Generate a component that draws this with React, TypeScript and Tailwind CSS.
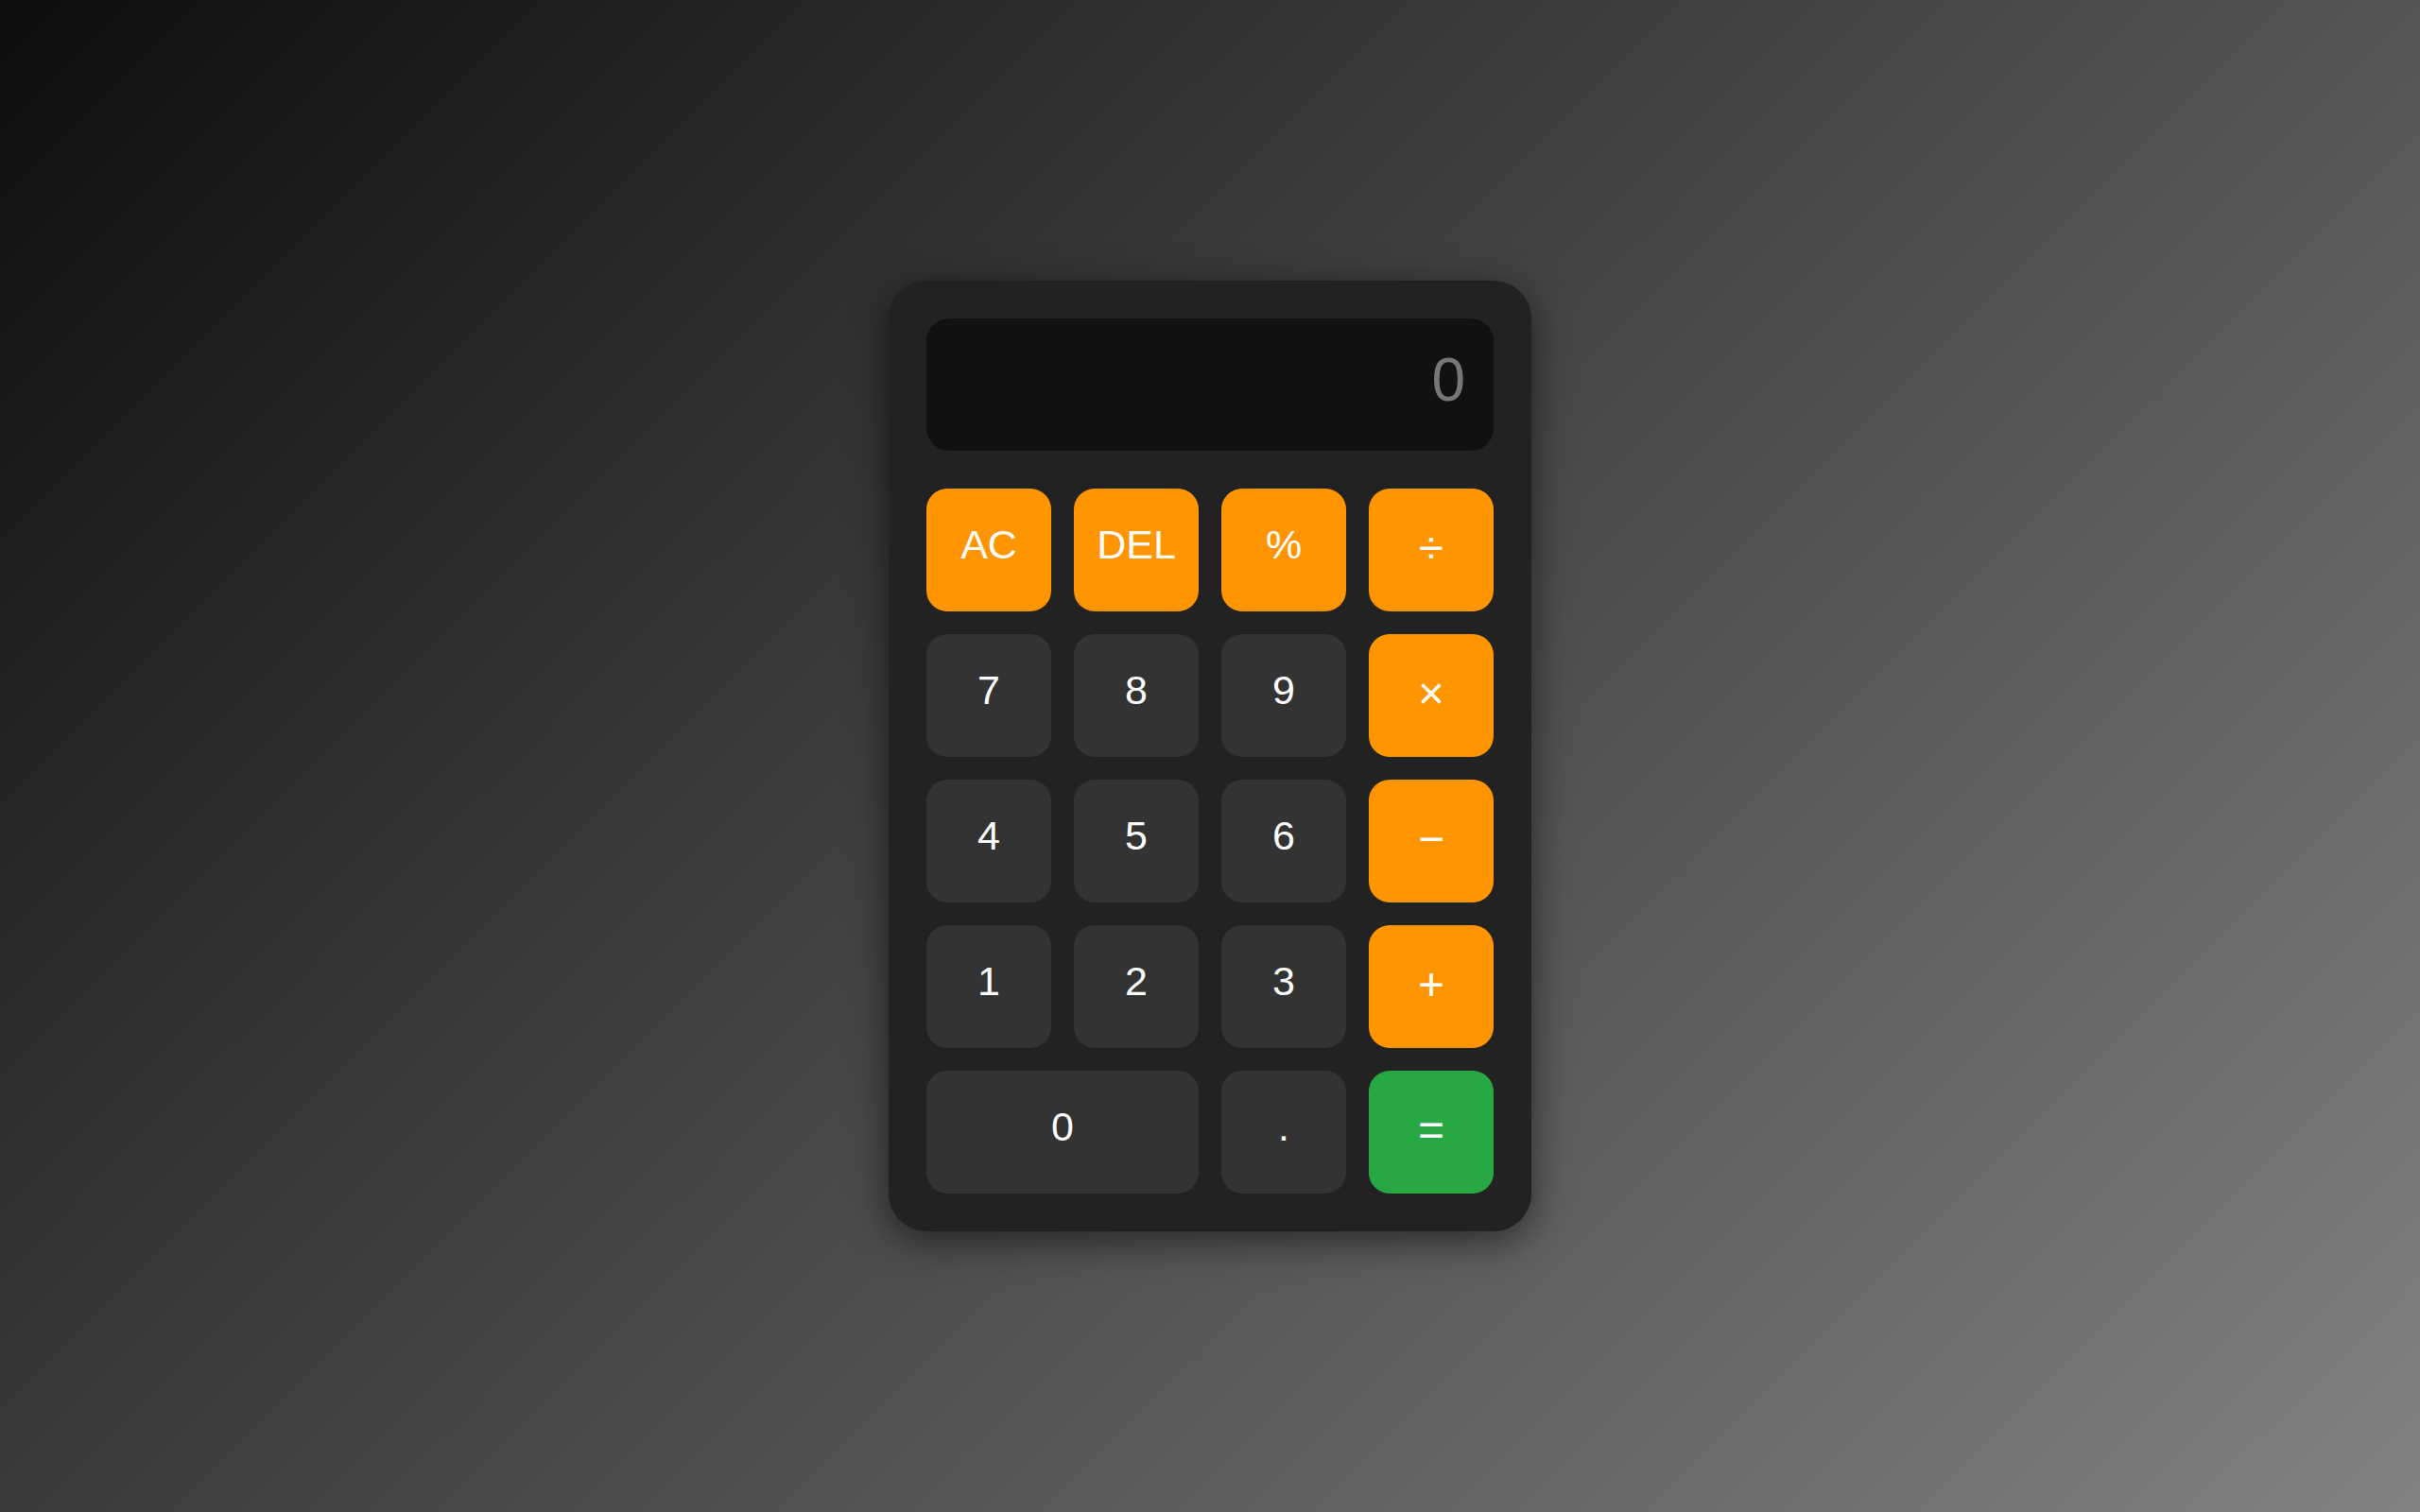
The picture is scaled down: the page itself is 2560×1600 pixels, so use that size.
import React from 'react';

type Key = {
  label: string;
  kind: 'op' | 'num' | 'eq';
  wide?: boolean;
  symbol?: boolean;
};

const keys: Key[] = [
  { label: 'AC', kind: 'op' },
  { label: 'DEL', kind: 'op' },
  { label: '%', kind: 'op' },
  { label: '÷', kind: 'op', symbol: true },
  { label: '7', kind: 'num' },
  { label: '8', kind: 'num' },
  { label: '9', kind: 'num' },
  { label: '×', kind: 'op', symbol: true },
  { label: '4', kind: 'num' },
  { label: '5', kind: 'num' },
  { label: '6', kind: 'num' },
  { label: '−', kind: 'op', symbol: true },
  { label: '1', kind: 'num' },
  { label: '2', kind: 'num' },
  { label: '3', kind: 'num' },
  { label: '+', kind: 'op', symbol: true },
  { label: '0', kind: 'num', wide: true },
  { label: '.', kind: 'num' },
  { label: '=', kind: 'eq', symbol: true },
];

const kindClass: Record<Key['kind'], string> = {
  op: 'bg-[#ff9500]',
  num: 'bg-[#333333]',
  eq: 'bg-[#28a745]',
};

export default function App() {
  return (
    <div
      className="flex min-h-screen w-full items-center justify-center bg-[linear-gradient(135deg,#0d0d0d,#828282)]"
      style={{ fontFamily: '"Liberation Sans", Arial, sans-serif' }}
    >
      <div className="w-[680px] rounded-[40px] bg-[#222222] p-[40px] shadow-[0_10px_40px_rgba(0,0,0,0.55)]">
        {/* display */}
        <div className="mb-[40px] h-[140px] rounded-[24px] bg-[#111111] pr-[30px] pt-[28px] text-right text-[64px] leading-[normal] text-[#777777]">
          0
        </div>

        <div className="grid grid-cols-4 gap-[24px]">
          {keys.map((k) => (
            <button
              key={k.label}
              className={`flex h-[130px] items-start justify-center rounded-[22px] pt-[35px] leading-[normal] text-white ${
                k.symbol ? 'text-[48px]' : 'text-[43px]'
              } ${kindClass[k.kind]} ${k.wide ? 'col-span-2' : ''}`}
            >
              {k.label}
            </button>
          ))}
        </div>
      </div>
    </div>
  );
}
